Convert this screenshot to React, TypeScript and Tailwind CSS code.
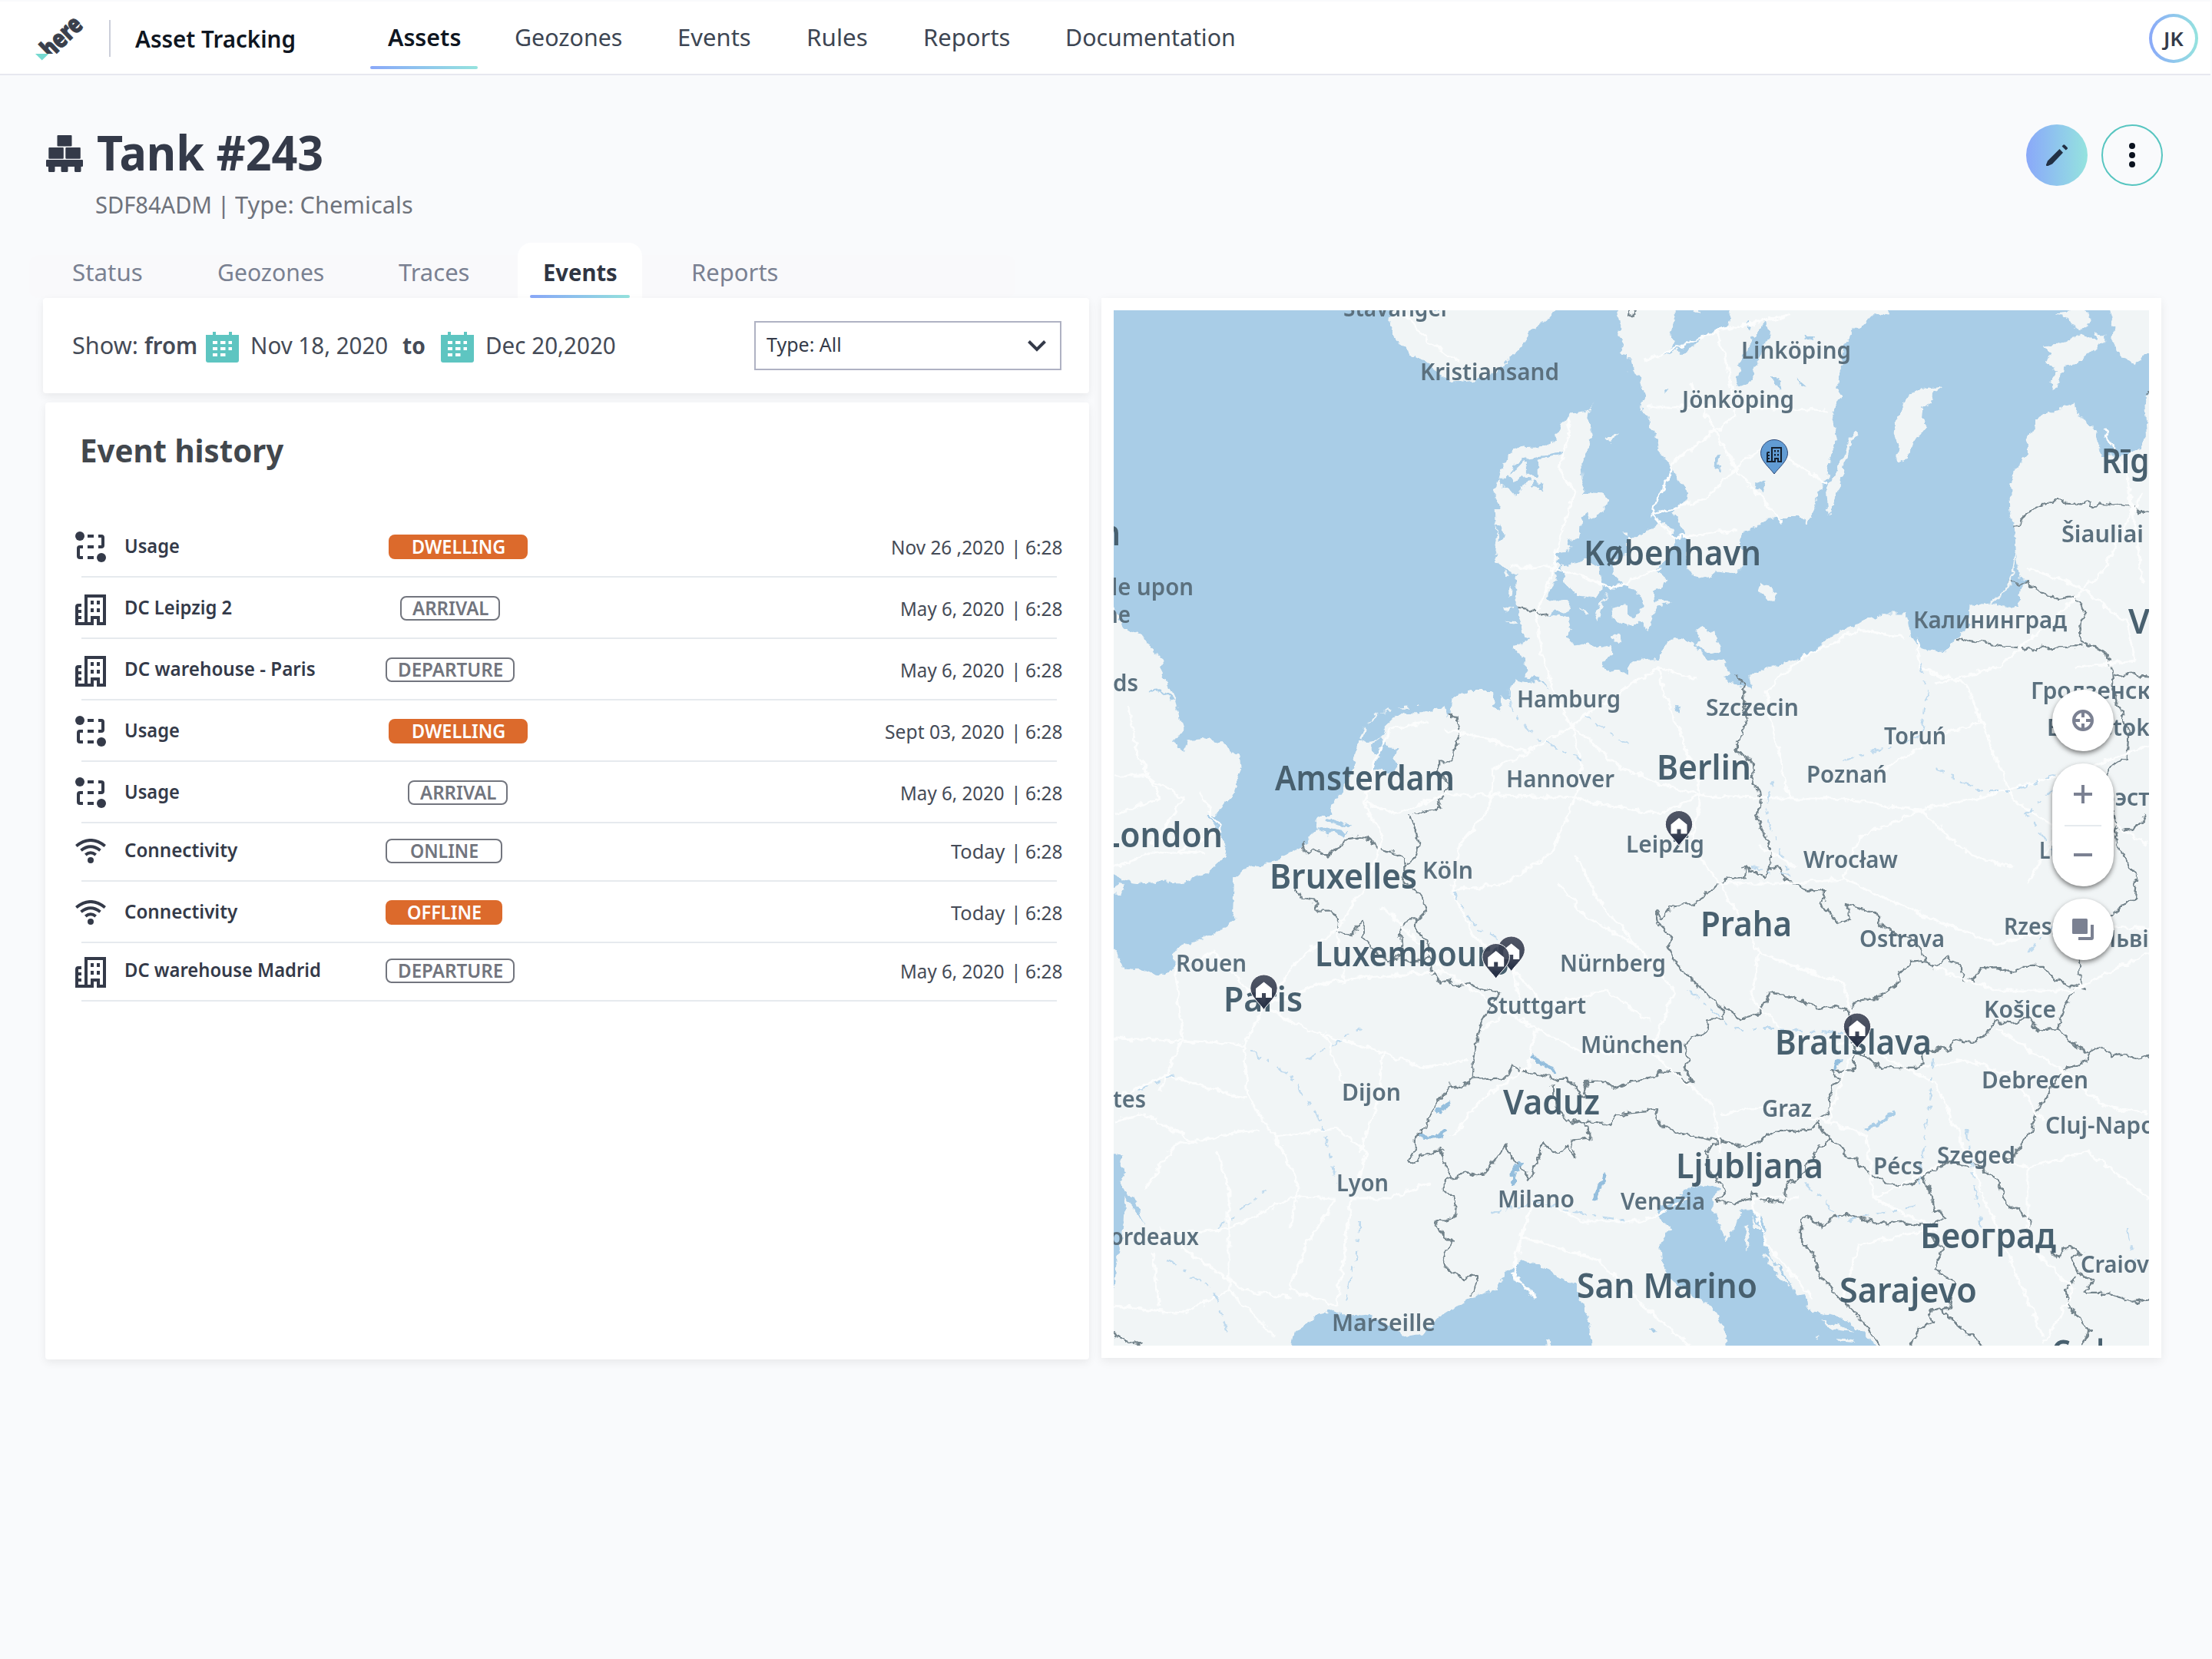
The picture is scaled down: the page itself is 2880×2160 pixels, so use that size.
import { useLayoutEffect, useRef, useState } from "react";
import type { ReactNode } from "react";

/** Single line of text scaled horizontally so that it fills exactly `w` pixels. */
function Fit({ w, children, className = "" }: { w: number; children: ReactNode; className?: string }) {
  const ref = useRef<HTMLSpanElement>(null);
  const [scale, setScale] = useState(1);
  useLayoutEffect(() => {
    if (ref.current) setScale(w / ref.current.offsetWidth);
  }, [w]);
  return (
    <span className={`inline-block shrink-0 whitespace-nowrap ${className}`} style={{ width: w }}>
      <span ref={ref} className="inline-block origin-left whitespace-pre" style={{ transform: `scaleX(${scale})` }}>
        {children}
      </span>
    </span>
  );
}

/* ---------- icons ---------- */

const HereLogo = () => (
  <svg width="68" height="64" viewBox="44 18 68 64" className="shrink-0 overflow-visible">
    <clipPath id="logo-cut">
      <rect x="40" y="0" width="90" height="70" />
    </clipPath>
    <g clipPath="url(#logo-cut)">
      <text
        transform="translate(66 77) rotate(-44)"
        textLength="61"
        lengthAdjust="spacingAndGlyphs"
        className="fill-[#3a3f4b] stroke-[#3a3f4b] stroke-1 font-['Noto_Sans'] text-[33px] font-black"
      >
        here
      </text>
    </g>
    <path d="M46 70h17.500l-8.800 8.500z" fill="#76d9d0" />
  </svg>
);

const PalletIcon = () => (
  <svg width="48" height="48" viewBox="0 0 48 48" fill="#343a49" className="shrink-0">
    <rect x="14.500" y="0" width="19" height="14.500" rx="1" />
    <rect x="3.300" y="16" width="19.500" height="14.700" rx="1" />
    <rect x="25.300" y="16" width="19.500" height="14.700" rx="1" />
    <path d="M1 32h46a1 1 0 0 1 1 1v7a1 1 0 0 1-1 1h-1.500v5.500a1.500 1.500 0 0 1-1.500 1.500h-5.500a1.500 1.500 0 0 1-1.500-1.500V41h-8.500v5.500A1.500 1.500 0 0 1 27 48h-6a1.500 1.500 0 0 1-1.500-1.500V41H11.500v5.500A1.500 1.500 0 0 1 10 48H4.500A1.500 1.500 0 0 1 3 46.500V41H1a1 1 0 0 1-1-1v-7a1 1 0 0 1 1-1z" />
  </svg>
);

const PencilIcon = () => (
  <svg width="28" height="28" viewBox="0 0 28 28" fill="#223044">
    <path d="M17.500 6 22 10.800 8 25.600 2 28.200C.6 28.600-.3 27.600.1 26.200L2 21.500z" />
    <path d="M20.600 2.600 22.200.8Q23.200-.4 24.400.8L27.400 3.700Q28.600 4.900 27.500 6L25.700 7.600z" />
  </svg>
);

const DotsIcon = () => (
  <svg width="8" height="32" viewBox="0 0 8 32" fill="#0b121f">
    <circle cx="4" cy="4" r="4" />
    <circle cx="4" cy="16" r="4" />
    <circle cx="4" cy="28" r="4" />
  </svg>
);

const CalendarIcon = () => (
  <svg width="43" height="40" viewBox="0 0 43 40" className="shrink-0">
    <path d="M0 4h9V0h4v4h17V0h4v4h9v33a3 3 0 0 1-3 3H3a3 3 0 0 1-3-3z" fill="#5ec5c1" />
    <path
      d="M9 12h6v4H9zM19 12h6.500v4H19zM29.500 12H34v4h-4.500zM9 20h6v4H9zM19 20h6.500v4H19zM29.500 20H34v4h-4.500zM9 28h6v4H9zM19 28h6.500v4H19z"
      fill="#fff"
    />
  </svg>
);

const UsageIcon = () => (
  <svg width="40" height="40" viewBox="0 0 40 40" className="mb-[18px] shrink-0">
    <g fill="#343a49">
      <circle cx="6" cy="6" r="6" />
      <circle cx="34" cy="34" r="6" />
    </g>
    <path
      d="M16 6h8M30 6h4q2 0 2 2v10q0 2-2 2h-4M16 20h8M10 20H6q-2 0-2 2v10q0 2 2 2h4M16 34h8"
      fill="none"
      stroke="#343a49"
      strokeWidth="4"
    />
  </svg>
);

const buildingPath =
  "M12 0H40V40H28V32H24V40H0V16Q0 12 4 12H8V16H4V20H8V24H4V28H8V32H4V36H12ZM16 4V36H20V28H32V36H36V4ZM20 8h4v5h-4zM28 8h4v5h-4zM20 18h4v5h-4zM28 18h4v5h-4z";

const BuildingIcon = () => (
  <svg width="40" height="40" viewBox="0 0 40 40" className="mb-4 shrink-0">
    <path d={buildingPath} fill="#343a49" fillRule="evenodd" />
  </svg>
);

const WifiIcon = () => (
  <svg width="40" height="32" viewBox="0 0 40 32" className="mb-[22px] shrink-0">
    <g fill="none" stroke="#343a49" strokeWidth="4">
      <path d="M1.300 9.500Q20-5.500 38.700 9.500" />
      <path d="M7.500 15.300Q20 5.300 32.500 15.300" />
      <path d="M13.300 21Q20 15.500 26.700 21" />
    </g>
    <circle cx="20" cy="28" r="4" fill="#343a49" />
  </svg>
);

/* ---------- map geometry ---------- */

const landNW = [
  "M835,50L828,100 840,130 860,160 885,180 900,195 930,210 960,235 990,262 1010,272 1040,268 1070,275 1090,262 1120,250 1160,220 1185,190 1200,180 1225,150 1235,120 1255,110 1260,95 1285,80 1310,50Z",
  "M1490,40L1500,90 1497,130 1510,160 1498,190 1530,195 1545,215 1522,240 1545,255 1535,285 1555,295 1560,340 1580,360 1600,40Z",
  "M1425,335L1405,360 1403,380 1417,405 1415,450 1400,480 1385,510 1388,560 1395,590 1385,610 1400,602 1450,605 1465,625 1450,660 1430,680 1410,685 1405,660 1385,680 1380,740 1345,745 1355,765 1345,780 1310,785 1330,805 1310,815 1325,822 1305,850 1310,870 1295,890 1290,925 1310,920 1340,925 1358,950 1345,965 1310,955 1290,970 1345,980 1355,1015 1340,1035 1370,1060 1400,1050 1440,1070 1470,1060 1475,1085 1445,1125 1470,1140 1500,1135 1520,1150 1540,1115 1570,1105 1620,1100 1620,1600 660,1600 655,1545 690,1500 715,1450 725,1400 735,1355 755,1350 790,1345 815,1320 815,1300 840,1275 875,1262 920,1262 985,1248 992,1275 1005,1268 1007,1230 1030,1205 1070,1197 1122,1197 1135,1225 1130,1245 1145,1258 1155,1240 1150,1218 1180,1225 1180,1190 1192,1165 1225,1172 1270,1168 1290,1200 1275,1165 1225,1152 1220,1100 1188,1075 1200,1060 1215,1055 1240,1040 1222,1035 1215,1000 1195,945 1198,850 1160,830 1130,805 1140,770 1135,650 1150,650 1135,620 1135,590 1150,540 1165,500 1190,475 1230,468 1280,465 1305,450 1330,395 1350,370 1395,365Z",
  "M1455,438L1495,430 1472,454Z",
  "M1325,820L1370,815 1400,805 1440,825 1448,880 1430,920 1400,915 1370,910 1340,870Z",
  "M1462,902L1445,950 1437,992 1427,972 1443,935Z",
  "M1380,945L1410,962 1400,970Z",
  "M1508,718L1535,740 1562,730 1530,760 1515,790 1480,800 1480,850 1500,870 1530,885 1570,895 1620,900 1620,720Z",
  "M1475,945L1500,940 1550,960 1568,985 1520,1008 1475,975Z",
  "M1475,1035L1495,1028 1504,1050 1480,1048Z",
  "M0,935L22,935 45,1005 110,1035 140,1080 172,1108 158,1130 200,1220 205,1245 225,1310 195,1355 225,1380 245,1347 285,1342 335,1352 385,1395 390,1440 370,1510 328,1560 330,1600 0,1600Z",
  "M735,1345L755,1305 757,1320 742,1348ZM765,1295L795,1265 785,1283ZM800,1262L828,1252 826,1258ZM845,1248L885,1244 880,1250ZM900,1244L918,1240 912,1246Z",
  "M1175,885L1186,890 1184,915 1174,912ZM1160,945L1186,950 1180,960 1160,955ZM1165,988L1200,995 1190,1002ZM1158,835L1178,850 1170,858Z",
];
const waterNW = [
  "M1145,560L1150,580 1180,595 1195,612 1207,602 1205,585 1240,570 1220,550 1185,572 1178,545 1200,530 1215,515 1225,510 1225,540 1262,560 1258,505 1330,490 1330,480 1290,490 1225,500 1195,515 1170,560Z",
  "M1245,570L1270,575 1276,600 1262,580 1246,592Z",
  "M1148,695L1163,735 1148,748 1138,700Z",
  "M775,1358L800,1340 820,1350 820,1368 850,1370 840,1400 850,1420 830,1445 800,1430 775,1440 785,1412 805,1398 778,1385Z",
  "M120,1196L155,1193 200,1222 192,1228 160,1200 122,1200Z",
];
const borderNW = [
  "M1195,947L1250,955 1270,970 1290,965",
  "M998,1272L1025,1275 1030,1330 1015,1370 1010,1410 968,1410 968,1440 1005,1480 990,1510 968,1525 980,1550 930,1560 880,1575",
  "M1520,50L1522,72 1545,72 1552,55",
];

const landNE = [
  "M-20,30L-20,195 10,200 15,235 35,260 45,310 35,350 55,370 60,410 75,420 90,480 115,520 150,570 168,600 165,630 140,640 125,665 150,700 170,760 165,820 180,850 215,858 245,840 310,848 325,820 330,790 315,760 325,720 360,710 375,690 400,685 430,680 495,680 500,700 520,670 535,620 550,575 565,560 570,500 592,440 575,370 590,340 602,310 590,290 605,240 605,200 610,170 640,110 660,110 700,65 740,68 740,30Z",
  "M640,420L648,430 625,470 610,540 575,660 565,668 560,600 600,510 620,460Z",
  "M890,285L870,300 860,330 835,345 832,385 845,405 820,440 790,490 770,518 758,510 770,480 755,430 760,385 795,310 820,295 850,290Z",
  "M1355,125L1355,150 1330,165 1280,210 1235,225 1220,275 1205,295 1198,270 1220,235 1185,215 1195,185 1180,165 1225,160 1250,145 1290,130 1330,145 1325,125Z",
  "M1210,65L1245,62 1290,40 1315,85 1270,115 1250,80Z",
  "M1355,30L1375,100 1370,150 1395,190 1440,220 1460,190 1500,185 1500,30Z",
  "M1500,300L1465,310 1472,430 1450,470 1400,490 1340,490 1325,415 1300,395 1268,355 1265,335 1165,375 1130,435 1130,490 1095,530 1083,590 1085,650 1095,710 1100,790 1110,860 1128,870 1105,905 1112,945 1090,950 1030,935 968,940 965,1000 930,1040 900,1080 850,1075 820,1065 800,1030 790,965 735,965 665,990 575,1028 530,1080 470,1105 390,1130 345,1150 350,1185 310,1180 270,1160 290,1150 265,1105 225,1110 200,1075 185,1060 150,1040 115,1045 80,1100 20,1105 -20,1140 -20,1600 1500,1600Z",
  "M-20,720L10,740 40,725 60,710 95,690 125,710 130,760 110,800 75,830 110,860 95,885 70,900 75,930 120,930 80,950 55,1020 40,990 -20,1010 -20,975 20,975 45,945 25,895 -20,885Z",
  "M378,872L420,905 412,930 368,905Z",
  "M215,1000L225,1020 245,1018 248,1040 260,1075 225,1085 195,1065 205,1045 190,1020Z",
];
const waterNE = [
  "M130,30L130,90 120,120 135,150 100,192 140,175 150,185 190,160 215,130 240,118 280,110 290,60 300,30ZM180,30L205,65 190,60Z",
  "M360,130L390,90 400,125 375,190 345,270 303,290 318,215 345,150Z",
  "M335,85L348,95 342,112 333,100Z",
  "M405,255L430,270 440,290 415,280ZM480,262L505,285 490,282ZM248,490L262,488 258,540 245,530ZM362,570L385,575 378,600 362,590ZM500,130L525,132 520,145 500,140ZM100,295L115,290 108,305Z",
  "M130,1240L148,1245 142,1268ZM275,1160L340,1168 355,1195 320,1185Z",
];
const borderNE = [
  "M1092,703L1105,700 1120,675 1150,650 1180,640 1215,622 1240,635 1280,640 1305,630 1320,648 1335,635 1380,640 1430,645 1445,660 1490,658",
  "M1078,870L1110,878 1130,872 1145,890 1215,922 1265,915 1297,960 1282,990 1280,1050 1300,1055 1355,1085 1370,1140 1375,1200 1400,1270 1418,1330 1415,1400 1370,1425 1350,1460 1365,1500 1380,1600",
  "M932,1042L1000,1052 1130,1072 1290,1062",
  "M1375,1150L1400,1155 1425,1142 1450,1150 1490,1152",
  "M310,1150L325,1180 325,1240 340,1270 325,1330 305,1350 305,1375 355,1415 350,1460 370,1500 375,1540 360,1575",
  "M-20,55L5,72 25,60M1490,290L1470,305",
];

const waterSW = [
  "M300,-20L300,10 330,50 350,80 345,120 300,160 220,190 170,188 100,195 60,190 0,160 0,370 22,380 40,400 48,430 100,435 165,450 200,430 195,395 215,370 300,340 345,320 378,292 365,280 370,180 395,155 470,140 520,115 590,80 590,65 620,40 610,20 650,-20Z",
  "M0,950L50,955 45,970 58,1000 40,1030 50,1050 85,1080 110,1150 95,1120 55,1070 48,1180 30,1260 22,1340 0,1350Z",
  "M540,1500L548,1450 580,1430 650,1385 700,1405 760,1400 830,1430 870,1460 930,1450 970,1410 1060,1355 1140,1330 1165,1280 1210,1250 1260,1260 1330,1300 1370,1320 1390,1370 1412,1430 1415,1500Z",
  "M620,35L700,50 690,60 625,50ZM640,10L720,30 710,36 640,20ZM1405,1480L1450,1500 1405,1500Z",
];
const landSW = ["M22,205L45,193 56,208 38,226 22,222Z", "M1278,1474L1292,1472 1294,1500 1282,1500Z"];
const borderSW = [
  "M575,82L585,110 605,98 640,115 680,98 700,70 740,65 775,70 790,95 830,105 865,125 870,150",
  "M880,-15L900,40 912,80 905,120 870,150 865,185 905,215 925,240 932,270 905,295 880,295 858,330 862,390 830,415 775,375 745,345 755,310 745,300 720,335 670,330 672,295 660,270 615,270 610,240 568,235 550,195",
  "M905,295L905,330 935,355 945,400 950,440 975,472 1000,465 1030,480 1060,472 1090,490 1150,500 1120,540 1095,580 1080,640 1070,690 1068,738",
  "M862,400L890,415 945,405",
  "M1068,740L1170,738 1185,705 1215,720 1270,728 1320,745 1345,745 1375,770 1390,790 1405,745 1450,745 1480,768 1540,745 1590,732",
  "M1068,740L1040,765 1000,755 990,775 940,850 935,875 900,905 900,940 880,970 905,975 920,960 985,935",
  "M975,930L985,970 1005,1015 985,1025 985,1050 1010,1070 1023,1105 1015,1130 960,1140 985,1175 1010,1200 985,1235 995,1275 1040,1298 1080,1292 1085,1310 1062,1345",
  "M1005,1018L1060,1005 1100,1010 1135,965 1168,925 1180,960 1215,990 1235,1025 1245,990 1270,950 1270,915 1310,950 1350,935 1372,962 1360,910 1410,905 1400,860 1350,860 1310,820 1305,760",
  "M1405,858L1440,865 1470,872 1490,840 1590,832",
  "M0,1440L60,1475 105,1482",
];

const waterSE = [
  "M165,1050L190,1040 240,1040 262,1050 235,1075 245,1120 260,1160 280,1195 305,1150 320,1105 350,1105 390,1150 385,1200 410,1250 440,1280 465,1325 500,1350 510,1385 560,1400 620,1415 660,1445 710,1500 285,1500 270,1430 240,1380 190,1350 130,1310 100,1270 90,1200 120,1160 95,1140 85,1100 130,1080Z",
  "M665,878L700,868 752,828 758,838 710,876 668,884Z",
  "M62,1440L80,1445 72,1454Z",
];
const landSE = [
  "M328,1155L338,1150 345,1200 336,1225ZM355,1125L372,1160 360,1160ZM385,1225L420,1265 460,1320 430,1300 395,1250Z",
  "M540,1412L600,1432 640,1450 580,1440ZM590,1465L640,1470 650,1478 600,1475ZM530,1462L545,1465 535,1470Z",
];
const borderSE = [
  "M355,-15L380,50 405,90 400,150 385,180 365,165 325,150 335,175 280,180 230,215 180,250 120,260 95,295 78,270 85,305 125,345 112,370 135,420 180,460 220,505 265,540 270,575 228,575 222,610 180,625 155,650 175,690 160,710 182,750 150,740 145,722 85,720 80,735 -20,752",
  "M400,150L430,155 445,185 520,215 560,215 545,250 595,305 630,290 618,250 710,280 710,305 750,330 800,345 835,380 840,410",
  "M270,540L320,575 370,560 385,535 400,500 450,505 540,545 580,535 625,550 650,525 720,510 760,480 775,440 800,415 840,410 870,430 905,400 945,430 950,465 980,462 1000,435 1050,430 1085,445 1120,425 1180,425 1210,465 1300,490 1280,465 1278,400",
  "M625,550L630,600 640,660 670,675 715,710 820,708 840,700 835,665 860,660 910,655 920,630 970,640 1010,620 1040,580 1090,585 1135,570 1165,605 1215,600 1235,540 1265,490",
  "M1215,600L1270,650 1310,665 1335,650 1370,675 1410,670 1440,685 1490,675",
  "M1310,665L1290,695 1230,715 1200,770 1160,830 1140,885 1115,920 1100,950 1070,965",
  "M640,660L640,718 570,720 598,740 570,770 575,830 535,855 520,880 400,890 350,930 255,915 110,885 80,850 85,825 -20,838",
  "M535,855L555,890 585,920 640,965 680,1005 730,1030 795,1040 840,1010 910,975 1000,985 1050,1030 1065,1080 1140,1135 1130,1165",
  "M255,915L220,945 225,990 260,1030 278,1060 250,1080 300,1088 345,1075 355,1055 380,1080 440,1088 445,1045 500,1000 540,930 575,912",
  "M840,1010L855,1060 865,1105 905,1125 835,1155 890,1210 870,1270 925,1310 910,1380 850,1390 865,1420 820,1440 800,1495",
  "M835,1150L780,1140 710,1145 620,1120 575,1130 550,1158 515,1122 490,1135 490,1190 530,1240 540,1285 590,1340 650,1400 680,1440 715,1490",
  "M885,1385L940,1430 1010,1490",
  "M1200,1220L1215,1240 1250,1205 1285,1230 1255,1240 1280,1285 1320,1305 1295,1340 1360,1340 1440,1365 1490,1355",
  "M1270,1290L1240,1330 1250,1380 1310,1445 1285,1490",
  "M1385,40L1430,45 1455,25 1470,-10M1375,-10L1385,80 1440,175 1435,240 1400,255 1370,290",
];

const roads = [
  "M2046,945L2025,905 2010,860 2000,800 2020,750 2030,700 2050,640 2030,610 2045,560 2040,545",
  "M2025,740L2100,765 2160,740M1965,738L2025,738M2046,945L2125,890 2160,870 2210,885",
  "M2046,945L2110,1000 2160,1020 2215,1035 2300,1040 2400,1040 2500,1055 2610,1030 2700,1005 2798,970",
  "M2046,945L2060,1000 2050,1040 2100,1050 2160,1060 2215,1035M1875,1035L1960,1035 2050,1040",
  "M2046,945L1990,980 1930,960 1880,950M1990,980L1945,1000 1940,1050 1900,1100 1890,1160",
  "M2050,1040L2020,1110 1960,1150 1890,1160 1920,1220 1970,1260 2010,1310 2090,1290 2150,1330",
  "M2215,1035L2200,1100 2240,1150 2290,1240 2340,1260 2400,1280 2420,1360 2520,1410 2560,1500 2600,1600 2660,1740",
  "M2240,1150L2330,1150 2400,1145 2500,1190 2600,1230 2700,1200 2798,1210M2400,1145L2420,1090 2500,1055",
  "M2215,1035L2190,960 2165,900 2160,870M2330,1040L2310,960 2300,900 2340,860 2420,820 2480,830",
  "M1775,1045L1820,1060 1875,1035M1775,1045L1790,990 1810,950 1860,940M1775,1045L1800,1090 1780,1150 1740,1210 1690,1250 1645,1310",
  "M1645,1310L1720,1280 1800,1270 1880,1265 1950,1310 2000,1340M1645,1310L1700,1340 1800,1370 1850,1390 1910,1380",
  "M1645,1310L1620,1360 1540,1355 1450,1352M1645,1310L1580,1240 1530,1260M1620,1360L1625,1430 1660,1480 1740,1470 1780,1500 1760,1560 1810,1560 1860,1540",
  "M1800,1370L1795,1430 1770,1500M1740,1560L1700,1620 1680,1680 1740,1700 1760,1560M1450,1430L1520,1400 1620,1430",
  "M1490,1550L1530,1490 1640,1470M1490,1610L1600,1600 1680,1560 1740,1560M1510,1600L1560,1640 1620,1680 1680,1690M1600,1680L1600,1550 1585,1500",
  "M1450,1700L1540,1710 1600,1680 1660,1740M1500,1630L1510,1700M1530,1260L1540,1350 1510,1420",
  "M2150,1370L2060,1370 2000,1340 1990,1390 1930,1430 1890,1480M2150,1370L2180,1290 2130,1230 2080,1170 2050,1110",
  "M1980,1610L2000,1560 2060,1590 2140,1590 2200,1560M1980,1610L1970,1660 2000,1690M1980,1610L2080,1640 2140,1700 2200,1752",
  "M2240,1450L2300,1440 2380,1460 2430,1480 2440,1560 2520,1600M2150,1370L2230,1440 2240,1500M2380,1460L2400,1400 2418,1360",
  "M2290,1240L2280,1300 2330,1350 2418,1360M2640,1150L2680,1080 2620,1040 2580,940 2560,890 2500,870 2495,830",
  "M2520,890L2600,870 2680,800 2740,740 2790,640M2640,740L2700,760 2770,810 2780,860 2700,870M2740,560L2770,620 2790,760",
  "M2150,670L2220,650 2270,600 2300,580 2380,630M2150,670L2180,600 2260,540 2250,480 2235,430M2145,530L2260,530 2380,535M2200,500L2260,610 2320,680",
  "M2150,670L2180,700 2260,690M2140,470L2240,430 2330,410M1830,410L1860,445 1900,470",
  "M1450,1010L1490,1010 1540,1040 1500,1100M1470,920L1480,980 1510,1040 1450,1060M1450,1130L1500,1110 1570,1110M1530,1110L1590,1080 1560,1030",
  "M2340,1560L2280,1560 2300,1620 2360,1690M2520,1600L2420,1620 2400,1690M2440,1560L2560,1500 2640,1520 2720,1500 2798,1560",
  "M2640,1520L2640,1620 2700,1680 2660,1752M2600,1340L2680,1390 2740,1440 2798,1450M2520,1260L2600,1290 2700,1290 2798,1240",
  "M2290,1100L2340,1130M2500,1055L2560,1110 2620,1130M2580,940L2520,960 2440,1010M2700,1005L2730,1060 2798,1100",
  "M1725,1345L1745,1400 1760,1430M1560,1490L1490,1450 1450,1460M1660,1480L1690,1540 1680,1600M2030,1150L2060,1190 2130,1230",
  "M1800,1180L1850,1230 1880,1265M1740,1210L1750,1280M1970,1260L1980,1300 1930,1340M2500,1390L2560,1380 2620,1400 2660,1460",
];
const rivers = [
  "M1890,1160L1910,1190 1925,1210 1950,1220M2060,990L2000,960 1970,930 1962,890M2120,970L2060,930",
  "M2280,1130L2330,1140 2300,1060 2310,1010M2400,990L2500,960 2510,900 2500,860M2520,1000L2580,1030 2620,1030 2700,1000",
  "M2200,1290L2260,1340 2310,1340 2400,1345M2518,1380L2510,1450 2500,1540M1630,1370L1680,1400 1720,1460 1740,1540M1770,1590L1765,1640 1750,1700",
  "M1940,1580L2000,1565 2060,1580 2120,1590M2560,1470L2580,1600M1530,1400L1480,1420M1585,1600L1650,1550M1700,1380L1770,1340M2700,1000L2640,1060 2680,1120",
  "M2350,1540L2400,1590 2500,1570M2770,1600L2780,1640M1520,1640L1580,1680 1600,1740M2640,1240L2700,1180",
];
const lakes = ["M1995,1376L2025,1394", "M1850,1478Q1862,1486 1882,1474", "M1872,1446L1888,1436", "M2090,1531L2076,1560", "M1980,1515L1970,1528 1971,1542", "M2388,1392L2396,1380"];

type MapLabel = { t: string; x: number; x2: number; y: number; big?: boolean };
const labels: MapLabel[] = [
  { t: "Stavanger", x: 1749, x2: 1888, y: 412 },
  { t: "Kristiansand", x: 1849, x2: 2030, y: 495 },
  { t: "Linköping", x: 2267, x2: 2410, y: 467 },
  { t: "Jönköping", x: 2190, x2: 2336, y: 531 },
  { t: "København", x: 2062, x2: 2293, y: 736, big: true },
  { t: "Rīga", x: 2736, x2: 2822, y: 616, big: true },
  { t: "Šiauliai", x: 2684, x2: 2791, y: 706 },
  { t: "Калининград", x: 2491, x2: 2691, y: 818 },
  { t: "V", x: 2771, x2: 2799, y: 825, big: true },
  { t: "Гродзенск", x: 2644, x2: 2800, y: 910 },
  { t: "Białystok", x: 2665, x2: 2799, y: 958 },
  { t: "Toruń", x: 2453, x2: 2534, y: 969 },
  { t: "Szczecin", x: 2221, x2: 2342, y: 932 },
  { t: "Berlin", x: 2157, x2: 2280, y: 1015, big: true },
  { t: "Poznań", x: 2352, x2: 2457, y: 1019 },
  { t: "Брэст", x: 2716, x2: 2799, y: 1049 },
  { t: "Hamburg", x: 1975, x2: 2110, y: 921 },
  { t: "Hannover", x: 1961, x2: 2102, y: 1025 },
  { t: "Amsterdam", x: 1660, x2: 1894, y: 1029, big: true },
  { t: "n", x: 1433, x2: 1459, y: 710, big: true },
  { t: "le upon", x: 1447, x2: 1554, y: 775 },
  { t: "ne", x: 1438, x2: 1472, y: 811 },
  { t: "ds", x: 1449, x2: 1482, y: 900 },
  { t: "London", x: 1435, x2: 1592, y: 1103, big: true },
  { t: "Bruxelles", x: 1653, x2: 1845, y: 1157, big: true },
  { t: "Köln", x: 1852, x2: 1918, y: 1144 },
  { t: "Leipzig", x: 2117, x2: 2219, y: 1110 },
  { t: "Wrocław", x: 2348, x2: 2471, y: 1130 },
  { t: "Lublin", x: 2655, x2: 2735, y: 1118 },
  { t: "Praha", x: 2214, x2: 2333, y: 1219, big: true },
  { t: "Ostrava", x: 2421, x2: 2532, y: 1233 },
  { t: "Rzeszów", x: 2609, x2: 2726, y: 1217 },
  { t: "Львів", x: 2734, x2: 2815, y: 1233 },
  { t: "Luxembourg", x: 1712, x2: 1966, y: 1258, big: true },
  { t: "Rouen", x: 1531, x2: 1623, y: 1265 },
  { t: "Paris", x: 1593, x2: 1696, y: 1317, big: true },
  { t: "Nürnberg", x: 2031, x2: 2169, y: 1265 },
  { t: "Stuttgart", x: 1935, x2: 2065, y: 1320 },
  { t: "München", x: 2058, x2: 2192, y: 1371 },
  { t: "Košice", x: 2583, x2: 2677, y: 1325 },
  { t: "Bratislava", x: 2311, x2: 2515, y: 1373, big: true },
  { t: "Debrecen", x: 2580, x2: 2719, y: 1417 },
  { t: "Graz", x: 2294, x2: 2359, y: 1454 },
  { t: "Cluj-Napoca", x: 2663, x2: 2838, y: 1476 },
  { t: "Pécs", x: 2439, x2: 2504, y: 1529 },
  { t: "Szeged", x: 2522, x2: 2624, y: 1515 },
  { t: "Ljubljana", x: 2182, x2: 2374, y: 1534, big: true },
  { t: "Venezia", x: 2110, x2: 2220, y: 1575 },
  { t: "Milano", x: 1950, x2: 2050, y: 1572 },
  { t: "Lyon", x: 1740, x2: 1808, y: 1551 },
  { t: "Dijon", x: 1747, x2: 1824, y: 1433 },
  { t: "tes", x: 1449, x2: 1492, y: 1442 },
  { t: "ordeaux", x: 1445, x2: 1561, y: 1621 },
  { t: "Vaduz", x: 1957, x2: 2083, y: 1451, big: true },
  { t: "Београд", x: 2500, x2: 2677, y: 1625, big: true },
  { t: "Craiova", x: 2709, x2: 2815, y: 1657 },
  { t: "San Marino", x: 2053, x2: 2288, y: 1690, big: true },
  { t: "Sarajevo", x: 2395, x2: 2574, y: 1696, big: true },
  { t: "Marseille", x: 1734, x2: 1869, y: 1733 },
  { t: "София", x: 2671, x2: 2798, y: 1777, big: true },
];

const WATER = "#a9cde7";
const LAND = "#f1f5f6";

function Quadrant({ clip, matrix, base, under, over, borders }: { clip: string; matrix: string; base: string; under: string[]; over: string[]; borders: string[] }) {
  const first = base === WATER ? LAND : WATER;
  const second = base === WATER ? WATER : LAND;
  return (
    <g clipPath={`url(#${clip})`}>
      <g transform={matrix}>
        <rect x="-50" y="-50" width="1700" height="1700" fill={base} />
        <path d={under.join("")} fill={first} />
        <path d={over.join("")} fill={second} />
        <path d={borders.join("")} fill="none" stroke="#73838b" strokeWidth="5" strokeLinejoin="round" />
      </g>
    </g>
  );
}

const pins = [
  { x: 1967.700, y: 1218.500 },
  { x: 1947.700, y: 1228 },
  { x: 1645.500, y: 1268.500 },
  { x: 2186, y: 1055 },
  { x: 2418, y: 1318.500 },
];

function MapCanvas() {
  return (
    <svg width="1348" height="1348" viewBox="1450 404 1348 1348" className="block">
      <defs>
        <clipPath id="nw"><rect x="1440" y="394" width="680" height="666" /></clipPath>
        <clipPath id="ne"><rect x="2120" y="394" width="690" height="666" /></clipPath>
        <clipPath id="sw"><rect x="1440" y="1060" width="680" height="702" /></clipPath>
        <clipPath id="se"><rect x="2120" y="1060" width="690" height="702" /></clipPath>
        <filter id="coast" filterUnits="userSpaceOnUse" x="1440" y="394" width="1368" height="1368" colorInterpolationFilters="sRGB">
          <feTurbulence type="fractalNoise" baseFrequency="0.09" numOctaves="3" seed="4" result="n" />
          <feDisplacementMap in="SourceGraphic" in2="n" scale="11" xChannelSelector="R" yChannelSelector="G" />
          <feGaussianBlur stdDeviation="0.7" />
        </filter>
        <linearGradient id="pin" x1="0" y1="0" x2="0" y2="1">
          <stop offset="0" stopColor="#3a4153" stopOpacity="0.88" />
          <stop offset="0.55" stopColor="#343b4e" stopOpacity="0.92" />
          <stop offset="1" stopColor="#1f2a41" />
        </linearGradient>
      </defs>
      <g filter="url(#coast)">
        <Quadrant clip="nw" matrix="translate(1440 380) scale(0.44643 0.43367)" base={WATER} under={landNW} over={waterNW} borders={borderNW} />
        <Quadrant clip="ne" matrix="translate(2120 380) scale(0.45918 0.43367)" base={WATER} under={landNE} over={waterNE} borders={borderNE} />
        <Quadrant clip="sw" matrix="translate(1440 1060) scale(0.44643 0.46556)" base={LAND} under={waterSW} over={landSW} borders={borderSW} />
        <Quadrant clip="se" matrix="translate(2120 1060) scale(0.45918 0.46556)" base={LAND} under={waterSE} over={landSE} borders={borderSE} />
        <path d="M2625,718L2621,745 2612,770 2592,785" fill="none" stroke={LAND} strokeWidth="2.500" />
        <path d={roads.join("")} fill="none" stroke="#fcfdfd" strokeWidth="3" strokeLinejoin="round" />
        <path d={rivers.join("")} fill="none" stroke="#bfdaee" strokeWidth="2.200" strokeDasharray="14 8 6 10" />
        <path d={lakes.join("")} fill="none" stroke="#94bedd" strokeWidth="5" strokeLinecap="round" />
      </g>
      {labels.map((l) => (
        <text
          key={l.t}
          x={l.x}
          y={l.y}
          textLength={l.x2 - l.x}
          lengthAdjust="spacingAndGlyphs"
          className={
            l.big
              ? "fill-[#48606f] font-['Noto_Sans'] text-[45px] font-semibold"
              : "fill-[#5b707e] font-['Noto_Sans'] text-[31px] font-semibold"
          }
        >
          {l.t}
        </text>
      ))}
      {pins.map((p) => (
        <g key={p.x} transform={`translate(${p.x - 18} ${p.y})`}>
          <path d="M18 .5C27.700.5 35.700 8.400 35.700 18.200 35.700 29 24 37 18 46 12 37 .3 29 .3 18.200 .3 8.400 8.300.5 18 .5z" fill="url(#pin)" stroke="#fff" strokeWidth="1" />
          <path d="M18 10 28.500 18.500V30.500H20.500V24.500H15.500V30.500H7.500V18.500z" fill="#fff" />
        </g>
      ))}
      <g transform="translate(2292 572)">
        <path d="M18 .5C27.700.5 35.500 8.400 35.500 18.200 35.500 28 24 37 18 45 12 37 .5 28 .5 18.200.5 8.400 8.300.5 18 .5z" fill="#629cd4" stroke="#2f4a78" strokeWidth="1" />
        <path d={buildingPath} transform="translate(8 10) scale(.5)" fill="#14202f" fillRule="evenodd" />
      </g>
    </svg>
  );
}

function MapControls() {
  const shell = "w-20 bg-white shadow-[0_3px_6px_rgba(0,0,0,0.5)] flex items-center justify-center rounded-full";
  return (
    <div className="absolute top-[494px] right-[46px] flex flex-col gap-4">
      <div className={`${shell} h-20`}>
        <svg width="28" height="28" viewBox="0 0 28 28" fill="none" stroke="#7b8192" strokeWidth="4">
          <circle cx="14" cy="14" r="12" />
          <path d="M14 2v8M14 18v8M2 14h8M18 14h8" />
        </svg>
      </div>
      <div className={`${shell} h-40 flex-col`}>
        <div className="flex h-20 items-center">
          <svg width="24" height="24" viewBox="0 0 24 24" stroke="#7b8192" strokeWidth="4">
            <path d="M12 0v24M0 12h24" />
          </svg>
        </div>
        <div className="h-0.5 w-12 shrink-0 bg-[#e6eaee]" />
        <div className="flex h-[78px] items-center pb-1">
          <div className="h-1 w-6 bg-[#7b8192]" />
        </div>
      </div>
      <div className={`${shell} h-20`}>
        <svg width="28" height="28" viewBox="0 0 28 28">
          <rect width="20" height="20" rx="1.500" fill="#7b8192" />
          <path d="M26 8v17q0 1-1 1H8" fill="none" stroke="#7b8192" strokeWidth="4" />
        </svg>
      </div>
    </div>
  );
}

/* ---------- page data ---------- */

const nav = [
  { t: "Geozones", w: 140 },
  { t: "Events", w: 96 },
  { t: "Rules", w: 80 },
  { t: "Reports", w: 113 },
  { t: "Documentation", w: 222 },
];

type Row = {
  icon: "usage" | "building" | "wifi";
  name: string;
  w: number;
  badge: string;
  textW: number;
  hot?: boolean;
  box: string;
  date: string;
  dateW: number;
  short?: boolean;
};
const rows: Row[] = [
  { icon: "usage", name: "Usage", w: 72, badge: "DWELLING", textW: 122, hot: true, box: "ml-[4px] w-[181px]", date: "Nov 26 ,2020", dateW: 148 },
  { icon: "building", name: "DC Leipzig 2", w: 140, badge: "ARRIVAL", textW: 99, box: "ml-[19px] w-[130px]", date: "May 6, 2020", dateW: 136 },
  { icon: "building", name: "DC warehouse - Paris", w: 249, badge: "DEPARTURE", textW: 137, box: "w-[168px]", date: "May 6, 2020", dateW: 136 },
  { icon: "usage", name: "Usage", w: 72, badge: "DWELLING", textW: 122, hot: true, box: "ml-[4px] w-[181px]", date: "Sept 03, 2020", dateW: 156 },
  { icon: "usage", name: "Usage", w: 72, badge: "ARRIVAL", textW: 99, box: "ml-[29px] w-[130px]", date: "May 6, 2020", dateW: 136 },
  { icon: "wifi", name: "Connectivity", w: 147, badge: "ONLINE", textW: 89, box: "w-[152px]", date: "Today", dateW: 70, short: true },
  { icon: "wifi", name: "Connectivity", w: 147, badge: "OFFLINE", textW: 97, hot: true, box: "w-[152px]", date: "Today", dateW: 70 },
  { icon: "building", name: "DC warehouse Madrid", w: 256, badge: "DEPARTURE", textW: 137, box: "w-[168px]", date: "May 6, 2020", dateW: 136, short: true },
];

function EventRow({ r }: { r: Row }) {
  return (
    <li>
      <div className={`flex items-end ${r.short ? "h-[74px]" : "h-[78px]"}`}>
        {r.icon === "usage" ? <UsageIcon /> : r.icon === "building" ? <BuildingIcon /> : <WifiIcon />}
        <div className="mb-5 ml-6 w-[340px] text-[25px] leading-10 font-semibold text-[#343a49]">
          <Fit w={r.w}>{r.name}</Fit>
        </div>
        <div
          className={`mb-[22px] flex h-8 items-center justify-center rounded-lg pb-[3px] text-[25px] leading-8 font-semibold ${r.box} ${
            r.hot ? "bg-[#dc6a2c] text-white" : "border-2 border-[#72757e] text-[#72757e]"
          }`}
        >
          <Fit w={r.textW}>{r.badge}</Fit>
        </div>
        <div className="mb-[18px] ml-auto flex items-center text-[25px] leading-10 text-[#454b57]">
          <Fit w={r.dateW}>{r.date}</Fit>
          <span className="ml-[7px] w-4 text-center">|</span>
          <Fit w={49} className="ml-1">6:28</Fit>
        </div>
      </div>
      <div className="ml-2 h-0.5 w-[1270px] bg-[#e6eaee]" />
    </li>
  );
}

const GRAD = "bg-linear-to-r from-[#8aa8f9] to-[#95e3de]";

export default function App() {
  return (
    <div className="flex h-[2160px] w-[2880px] flex-col overflow-hidden bg-[#f9fafc] pt-0.5 font-['Noto_Sans',sans-serif]">
      <header className="flex h-24 w-[2878px] shrink-0 items-start border-b-2 border-[#e7e8ef] bg-white pl-11">
        <div className="mt-4">
          <HereLogo />
        </div>
        <div className="mt-6 ml-[30px] h-12 w-0.5 bg-[#cccfda]" />
        <div className="mt-7 ml-8 text-[31px] leading-10 font-semibold text-[#0f1621]">
          <Fit w={209}>Asset Tracking</Fit>
        </div>
        <nav className="ml-[97px] flex gap-6 text-[31px] leading-10">
          <div className="w-[140px]">
            <div className="flex h-[84px] items-center justify-center pt-2 font-semibold text-[#0f1621]">
              <Fit w={95}>Assets</Fit>
            </div>
            <div className={`h-1 rounded-full ${GRAD}`} />
          </div>
          {nav.map((n) => (
            <div key={n.t} className="flex h-[84px] items-center px-6 pt-2 text-[#3d4653]">
              <Fit w={n.w}>{n.t}</Fit>
            </div>
          ))}
        </nav>
        <div className={`mt-4 mr-4 ml-auto size-16 rounded-full p-1 ${GRAD}`}>
          <div className="flex size-full items-center justify-center rounded-full bg-white pt-0.5 text-[25px] font-semibold text-[#343a49]">
            <Fit w={26}>JK</Fit>
          </div>
        </div>
      </header>

      <section className="flex h-[218px] shrink-0 items-start pr-16 pl-[60px]">
        <div className="mt-[78px]">
          <PalletIcon />
        </div>
        <div className="ml-4">
          <h1 className="mt-[58px] ml-0.5 text-[63px] leading-[84px] font-bold text-[#343a49]">
            <Fit w={295}>Tank #243</Fit>
          </h1>
          <p className="mt-1.5 flex text-[31px] leading-10 text-[#6f737c]">
            <Fit w={152}>SDF84ADM</Fit>
            <span className="w-[30px] text-center">|</span>
            <Fit w={232}>Type: Chemicals</Fit>
          </p>
        </div>
        <div className="mt-16 ml-auto flex gap-[18px]">
          <button className={`flex size-20 items-center justify-center rounded-full ${GRAD}`}>
            <PencilIcon />
          </button>
          <button className="flex size-20 items-center justify-center rounded-full border-[2px] border-[#57c5c0]">
            <DotsIcon />
          </button>
        </div>
      </section>

      <nav className="flex h-[72px] shrink-0 items-end pl-[38px] text-[31px] leading-10 text-[#7a8192]">
        <div className="flex h-14 w-[1284px] items-end rounded-xl bg-[#f9f9fb] pl-14">
          <div className="mb-[14px] flex gap-[97px]">
            <Fit w={92}>Status</Fit>
            <Fit w={139}>Geozones</Fit>
            <Fit w={92}>Traces</Fit>
          </div>
          <div className="ml-[63px] flex h-[72px] w-[162px] shrink-0 flex-col items-center justify-end rounded-t-[18px] bg-white font-bold text-[#2f3543]">
            <Fit w={97}>Events</Fit>
            <div className={`mt-[10px] h-1 w-[130px] rounded-full ${GRAD}`} />
          </div>
          <Fit w={113} className="mb-[14px] ml-16">Reports</Fit>
        </div>
      </nav>

      <main className="flex shrink-0 items-start gap-4 pl-14">
        <div className="flex w-[1362px] flex-col gap-3">
          <div className="flex h-[124px] items-center rounded bg-white pr-9 pl-[38px] text-[31px] text-[#454b57] shadow-[0_4px_12px_rgba(0,0,0,0.07)]">
            <div className="flex items-center pb-0.5">
              <Fit w={86}>Show:</Fit>
              <Fit w={69} className="ml-2 font-semibold">from</Fit>
              <div className="ml-[11px] pt-1.5">
                <CalendarIcon />
              </div>
              <Fit w={179} className="ml-[15px]">Nov 18, 2020</Fit>
              <Fit w={30} className="ml-[19px] font-bold">to</Fit>
              <div className="ml-5 pt-1.5">
                <CalendarIcon />
              </div>
              <Fit w={170} className="ml-[15px]">Dec 20,2020</Fit>
            </div>
            <div className="ml-auto flex h-16 w-[400px] items-center justify-between border-2 border-[#afb2c3] pr-[18px] pl-3.5 text-[25px] text-[#343a49]">
              <Fit w={98} className="pb-0.5">Type: All</Fit>
              <svg width="24" height="15" viewBox="0 0 24 15" fill="none" stroke="#343a49" strokeWidth="4">
                <path d="M1.500 1.500 12 12 22.500 1.500" />
              </svg>
            </div>
          </div>

          <div className="ml-[3px] h-[1246px] rounded bg-white pt-[38px] pl-[39px] shadow-[0_4px_12px_rgba(0,0,0,0.07)]">
            <h2 className="ml-1.5 h-[110px] text-[42px] leading-[48px] font-bold text-[#42474d]">
              <Fit w={265}>Event history</Fit>
            </h2>
            <ul className="w-[1286px]">
              {rows.map((r, i) => (
                <EventRow key={i} r={r} />
              ))}
            </ul>
          </div>
        </div>

        <div className="bg-white p-4 shadow-[0_4px_12px_rgba(0,0,0,0.07)]">
          <div className="relative">
            <MapCanvas />
            <MapControls />
          </div>
        </div>
      </main>
    </div>
  );
}
